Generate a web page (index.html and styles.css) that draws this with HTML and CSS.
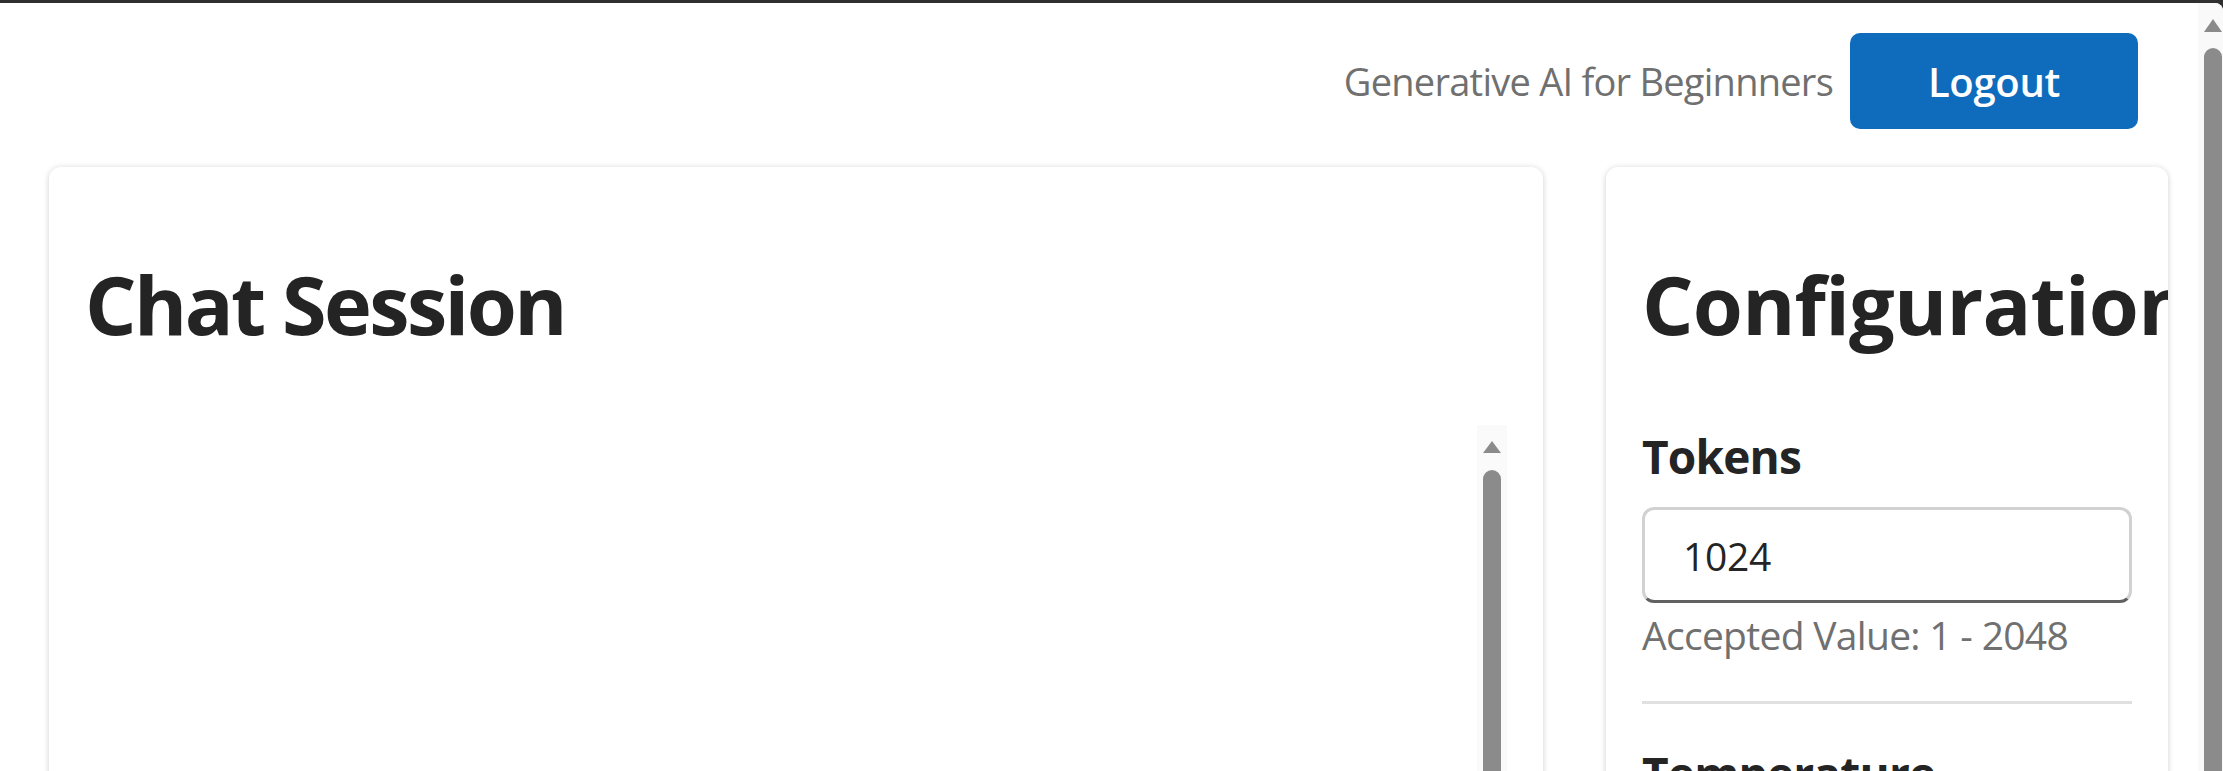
FILE: index.html
```html
<!DOCTYPE html>
<html lang="en">
<head>
<meta charset="utf-8">
<title>Generative AI for Beginnners</title>
<link rel="stylesheet" href="styles.css">
</head>
<body>
  <div class="window">
    <div class="page">
      <header class="topbar">
        <span class="app-title">Generative AI for Beginnners</span>
        <button class="btn-primary" type="button">Logout</button>
      </header>
      <main class="layout">
        <section class="card chat-card">
          <h1 class="card-title">Chat Session</h1>
          <div class="messages">
            <div class="messages-body"></div>
            <div class="inner-scrollbar">
              <span class="arrow-up"></span>
              <span class="thumb"></span>
            </div>
          </div>
        </section>
        <aside class="card config-card">
          <h1 class="card-title card-title-wide">Configuration</h1>
          <div class="field">
            <label class="field-label" for="tokens">Tokens</label>
            <div class="input-wrap">
              <input id="tokens" class="input" type="text" value="1024">
            </div>
            <div class="hint">Accepted Value: 1 - 2048</div>
          </div>
          <hr class="divider">
          <div class="field">
            <label class="field-label">Temperature</label>
          </div>
        </aside>
      </main>
    </div>
    <div class="page-scrollbar">
      <span class="arrow-up small"></span>
      <span class="thumb small"></span>
    </div>
  </div>
</body>
</html>
```

FILE: styles.css
```css
html, body {
  margin: 0;
  padding: 0;
  height: 100%;
  overflow: hidden;
}

body {
  background: #2f2f2f;
  padding-top: 3px;
  box-sizing: border-box;
  font-family: "Open Sans", "Noto Sans", sans-serif;
  color: #242424;
}

.window {
  display: flex;
  height: 768px;
  background: #ffffff;
  border-top-right-radius: 8px;
  overflow: hidden;
}

.page {
  flex: 1;
  min-width: 0;
  display: flex;
  flex-direction: column;
}

/* header */
.topbar {
  display: flex;
  justify-content: flex-end;
  align-items: center;
  gap: 17px;
  padding: 30px 60px 0 0;
  height: 96px;
  flex: none;
}

.app-title {
  font-size: 38px;
  color: #707070;
  letter-spacing: -0.75px;
  white-space: nowrap;
}

.btn-primary {
  width: 288px;
  height: 96px;
  border: none;
  border-radius: 10px;
  background: #0f6cbd;
  color: #ffffff;
  font-family: "Open Sans", "Noto Sans", sans-serif;
  font-weight: 600;
  font-size: 40px;
  letter-spacing: -0.3px;
  padding: 0;
}

/* main layout */
.layout {
  display: flex;
  align-items: flex-start;
  gap: 63px;
  padding: 38px 30px 0 49px;
}

.card {
  background: #ffffff;
  border-radius: 12px;
  box-shadow: 0 0 6px rgba(0, 0, 0, 0.12), 0 3px 6px rgba(0, 0, 0, 0.08);
  padding: 36px;
  box-sizing: border-box;
  overflow: hidden;
  display: flex;
  flex-direction: column;
  min-width: 0;
  height: 1100px;
}

.card > * {
  flex-shrink: 0;
}

.chat-card {
  width: 1494px;
  flex: none;
}

.config-card {
  flex: 1;
}

.card-title {
  margin: 51px 0 0;
  font-size: 81px;
  font-weight: 700;
  line-height: 100px;
  letter-spacing: -2.6px;
  white-space: nowrap;
  color: #242424;
}

.card-title-wide {
  letter-spacing: -0.8px;
}

/* chat messages area */
.messages {
  margin-top: 71px;
  flex: 1 1 auto;
  display: flex;
}

.messages-body {
  flex: 1;
}

.inner-scrollbar {
  width: 30px;
  background: #fafafa;
  display: flex;
  flex-direction: column;
  align-items: center;
  padding-top: 16px;
  box-sizing: border-box;
}

.arrow-up {
  width: 0;
  height: 0;
  border-left: 9px solid transparent;
  border-right: 9px solid transparent;
  border-bottom: 12px solid #8b8b8b;
}

.thumb {
  margin-top: 17px;
  width: 18px;
  flex: 1;
  background: #8b8b8b;
  border-radius: 9px 9px 0 0;
}

/* config form */
.field {
  display: flex;
  flex-direction: column;
}

.field-label {
  margin-top: 71px;
  font-size: 46px;
  font-weight: 700;
  line-height: 62px;
  letter-spacing: -0.8px;
  color: #242424;
  white-space: nowrap;
}

.input-wrap {
  margin-top: 20px;
  height: 96px;
  box-sizing: border-box;
  border: 3px solid #d1d1d1;
  border-bottom-color: #616161;
  border-radius: 12px;
  display: flex;
  align-items: center;
  padding: 0 30px 0 38px;
}

.input {
  border: none;
  outline: none;
  background: transparent;
  width: 100%;
  padding: 0;
  font-family: "Open Sans", "Noto Sans", sans-serif;
  font-size: 39px;
  color: #242424;
  letter-spacing: -0.3px;
}

.hint {
  margin-top: 6px;
  font-size: 39px;
  line-height: 52px;
  color: #707070;
  letter-spacing: -0.7px;
  white-space: nowrap;
}

.divider {
  margin: 40px 0 0;
  border: none;
  height: 3px;
  background: #e0e0e0;
}

.divider + .field .field-label {
  margin-top: 38px;
}

/* outer page scrollbar */
.page-scrollbar {
  width: 25px;
  flex: none;
  background: #f9f9f9;
  display: flex;
  flex-direction: column;
  align-items: flex-end;
  padding: 16px 1px 0 0;
  box-sizing: border-box;
}

.arrow-up.small {
  border-left-width: 9px;
  border-right-width: 9px;
  border-bottom-width: 13px;
}

.thumb.small {
  margin-top: 16px;
  width: 18px;
  border-radius: 9px 9px 0 0;
}
```
